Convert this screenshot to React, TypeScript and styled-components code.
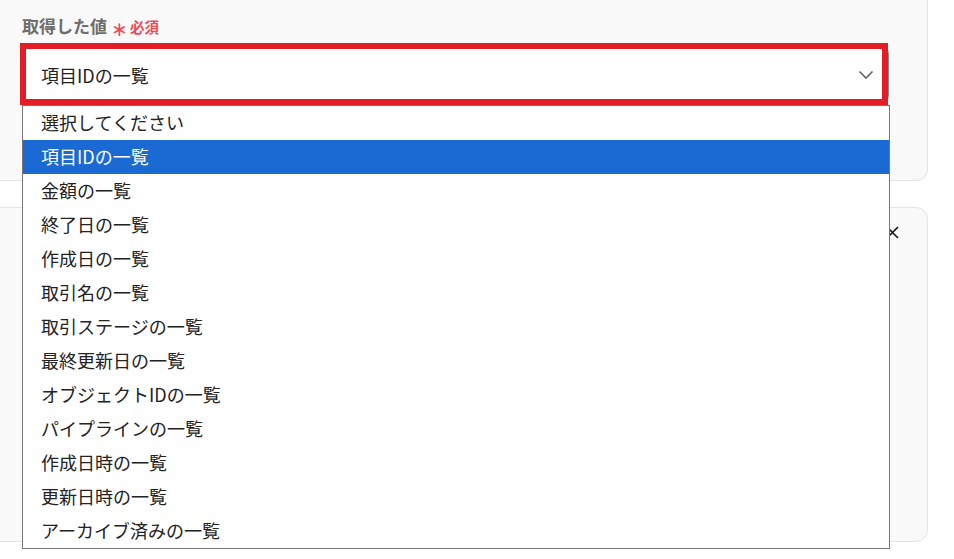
import React from "react";
import styled, { createGlobalStyle } from "styled-components";

const Global = createGlobalStyle`
  html, body { margin: 0; padding: 0; background: #ffffff; }
  body {
    font-family: "Noto Sans CJK JP", "Noto Sans", sans-serif;
    color: #222;
    overflow: hidden;
  }
`;

const Page = styled.div`
  width: 954px;
  height: 559px;
  position: relative;
  overflow: hidden;
`;

const Card = styled.section<{ $top?: boolean }>`
  box-sizing: border-box;
  width: 948px;
  margin-left: -20px;
  background: #f9f9f9;
  border: 1px solid #e4e4e4;
  ${(p) =>
    p.$top
      ? `border-top: none; border-radius: 0 0 12px 0; height: 181px; padding: 14px 0 0 41px;`
      : `border-radius: 0 12px 12px 0; height: 335px; margin-top: 26px; padding: 18px 28px 0 0;`}
`;

const Label = styled.div`
  display: flex;
  align-items: baseline;
  gap: 4px;
  font-size: 17px;
  font-weight: 700;
  color: #6d6d6d;
  line-height: 24px;
`;

const Required = styled.span`
  color: #ea4c55;
  font-size: 14.5px;
  font-weight: 700;
  display: inline-flex;
  align-items: baseline;
  gap: 2px;
`;

const Star = styled.span`
  font-size: 20px;
  font-weight: 400;
  line-height: 0;
  position: relative;
  top: 3px;
`;

const Field = styled.div`
  position: relative;
  margin-top: 6px;
  width: 867px;
`;

const SelectBox = styled.div`
  box-sizing: border-box;
  height: 59px;
  background: #fff;
  border: 1px solid #8a8a8a;
  border-radius: 9px;
  display: flex;
  align-items: center;
  justify-content: space-between;
  padding: 0 14px 0 18px;
  font-size: 18px;
  color: #222;
`;

const Highlight = styled.div`
  position: absolute;
  left: -2px;
  top: -2px;
  width: 868px;
  height: 62px;
  box-sizing: border-box;
  border: 6px solid #e21d25;
  pointer-events: none;
`;

const Menu = styled.ul`
  position: absolute;
  left: 0;
  top: 60px;
  width: 868px;
  box-sizing: border-box;
  margin: 0;
  padding: 0;
  list-style: none;
  background: #fff;
  border: 1px solid #767676;
  z-index: 2;
`;

const Item = styled.li<{ $active?: boolean }>`
  height: 34px;
  line-height: 33px;
  padding-left: 18px;
  font-size: 18px;
  color: ${(p) => (p.$active ? "#ffffff" : "#222")};
  background: ${(p) => (p.$active ? "#1b69d3" : "transparent")};
  white-space: nowrap;
`;

const CloseRow = styled.div`
  display: flex;
  justify-content: flex-end;
`;

const Close = styled.button`
  border: none;
  background: none;
  padding: 0;
  width: 13px;
  height: 13px;
  display: flex;
  color: #111;
`;

const options = [
  "選択してください",
  "項目IDの一覧",
  "金額の一覧",
  "終了日の一覧",
  "作成日の一覧",
  "取引名の一覧",
  "取引ステージの一覧",
  "最終更新日の一覧",
  "オブジェクトIDの一覧",
  "パイプラインの一覧",
  "作成日時の一覧",
  "更新日時の一覧",
  "アーカイブ済みの一覧",
];

export default function App() {
  return (
    <Page>
      <Global />
      <Card $top>
        <Label>
          取得した値
          <Required>
            <Star>∗</Star>必須
          </Required>
        </Label>
        <Field>
          <SelectBox>
            <span>項目IDの一覧</span>
            <svg width="16" height="10" viewBox="0 0 16 10" fill="none">
              <path d="M1.5 1.5 L8 8 L14.5 1.5" stroke="#666" strokeWidth="1.6" />
            </svg>
          </SelectBox>
          <Highlight />
          <Menu>
            {options.map((o, i) => (
              <Item key={o} $active={i === 1}>
                {o}
              </Item>
            ))}
          </Menu>
        </Field>
      </Card>
      <Card>
        <CloseRow>
          <Close aria-label="close">
            <svg width="13" height="13" viewBox="0 0 13 13">
              <path d="M1 1 L12 12 M12 1 L1 12" stroke="#111" strokeWidth="1.6" />
            </svg>
          </Close>
        </CloseRow>
      </Card>
    </Page>
  );
}
